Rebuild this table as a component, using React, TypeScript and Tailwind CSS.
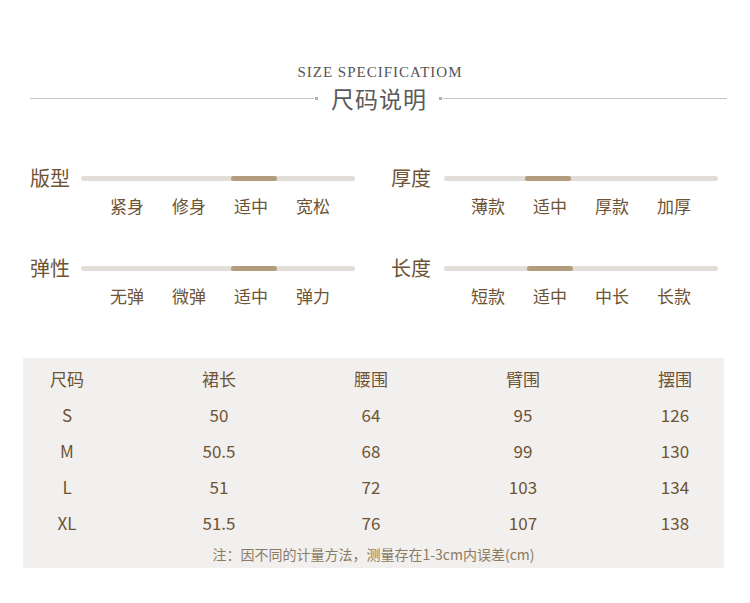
const sans = { fontFamily: '"Noto Sans CJK SC", "Noto Sans", sans-serif' };

type Scale = { label: string; options: string[]; start: number };

const scales: Scale[][] = [
  [
    { label: "版型", options: ["紧身", "修身", "适中", "宽松"], start: 150 },
    { label: "厚度", options: ["薄款", "适中", "厚款", "加厚"], start: 81 },
  ],
  [
    { label: "弹性", options: ["无弹", "微弹", "适中", "弹力"], start: 150 },
    { label: "长度", options: ["短款", "适中", "中长", "长款"], start: 83 },
  ],
];

const rows = [
  ["S", "50", "64", "95", "126"],
  ["M", "50.5", "68", "99", "130"],
  ["L", "51", "72", "103", "134"],
  ["XL", "51.5", "76", "107", "138"],
];

const cols = "grid grid-cols-[120px_152px_152px_152px_1fr] items-center text-[17px]";

function ScaleRow({ s, labelW }: { s: Scale; labelW: string }) {
  return (
    <div className="w-[328px]">
      <div className="flex items-center h-[26px]">
        <span className={`${labelW} text-[20px] leading-none text-[#6e5334]`}>{s.label}</span>
        <div className="relative w-[274px] h-[5px] rounded-full bg-[#e2ddd6]">
          <div
            className="absolute top-0 h-[5px] w-[46px] rounded-full bg-[#b19c7c]"
            style={{ left: s.start }}
          />
        </div>
      </div>
      <div className="flex pl-[80px] mt-[3px]">
        {s.options.map((o) => (
          <span key={o} className="w-[62.5px] text-[17px] leading-[24px] text-[#6e5334]">
            {o}
          </span>
        ))}
      </div>
    </div>
  );
}

export default function App() {
  return (
    <div className="w-[750px] h-[603px] bg-white" style={sans}>
      <div
        className="pt-[62px] pl-[10px] text-center text-[15px] leading-[20px] tracking-[1px] text-[#555]"
        style={{ fontFamily: '"Liberation Serif", serif' }}
      >
        SIZE SPECIFICATIOM
      </div>
      <div className="flex items-center pl-[30px] pr-[23px] h-[32px]">
        <div className="flex-1 h-px bg-[#c4c4c4]" />
        <div className="w-[3px] h-[3px] bg-[#b0b0b0] ml-[1px]" />
        <span className="pl-[13px] pr-[12px] text-[23px] leading-none tracking-[1px] text-[#5a5a5a]">尺码说明</span>
        <div className="w-[3px] h-[3px] bg-[#b0b0b0] mr-[1px]" />
        <div className="flex-1 h-px bg-[#c4c4c4]" />
      </div>

      <div className="flex flex-col gap-[37px] mt-[51px] pl-[30px]">
        {scales.map((pair, i) => (
          <div key={i} className="flex gap-[33px]">
            <ScaleRow s={pair[0]} labelW="w-[51px]" />
            <ScaleRow s={pair[1]} labelW="w-[53px]" />
          </div>
        ))}
      </div>

      <div className="mx-[23px] mt-[50px] w-[701px] h-[210px] bg-[#f2f0ee] pt-[2px] text-[#6e5334]">
        <div className={`${cols} h-[37px]`}>
          {["尺码", "裙长", "腰围", "臂围", "摆围"].map((h, j) => (
            <span key={h} className={j === 0 ? "pr-[32px] text-center" : j === 4 ? "pl-[27px] text-center" : "text-center"}>
              {h}
            </span>
          ))}
        </div>
        {rows.map((r) => (
          <div key={r[0]} className={`${cols} h-[36px]`}>
            {r.map((c, j) => (
              <span key={j} className={j === 0 ? "pr-[32px] text-center" : j === 4 ? "pl-[27px] text-center" : "text-center"}>
                {c}
              </span>
            ))}
          </div>
        ))}
        <div className="text-center text-[14px] leading-[18px] text-[#8c7a62] mt-[4px]">
          注：因不同的计量方法，测量存在1-3cm内误差(cm)
        </div>
      </div>
    </div>
  );
}
